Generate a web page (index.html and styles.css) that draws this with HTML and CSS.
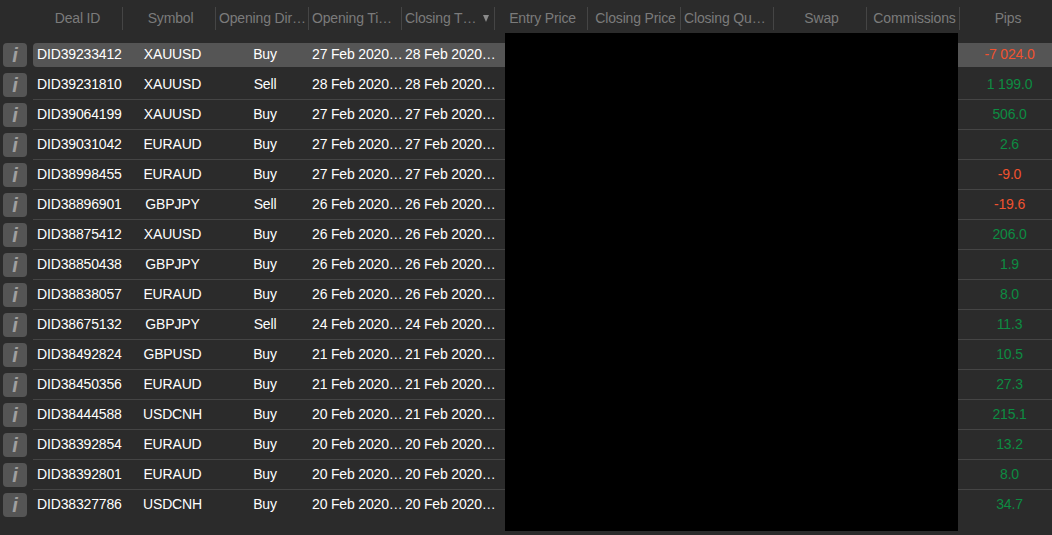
FILE: index.html
```html
<!DOCTYPE html>
<html lang="en">
<head>
<meta charset="utf-8">
<title>Deals</title>
<link rel="stylesheet" href="styles.css">
</head>
<body>
<div class="page">
  <div class="head">
    <div class="hc first">Deal ID</div>
    <div class="hc">Symbol</div>
    <div class="hc trunc">Opening Dir…</div>
    <div class="hc trunc">Opening Ti…</div>
    <div class="hc trunc">Closing T…<span class="arrow"></span></div>
    <div class="hc">Entry Price</div>
    <div class="hc">Closing Price</div>
    <div class="hc trunc">Closing Qu…</div>
    <div class="hc">Swap</div>
    <div class="hc">Commissions</div>
    <div class="hc last">Pips</div>
  </div>
  <div class="rows">
    <div class="row selected"><div class="info">i</div><div class="cells"><div class="inner"><span class="id">DID39233412</span><span class="sym">XAUUSD</span><span class="dir">Buy</span><span class="time">27 Feb 2020…</span><span class="time">28 Feb 2020…</span><span class="gap"></span><span class="pips neg">-7 024.0</span></div></div></div>
    <div class="row"><div class="info">i</div><div class="cells"><div class="inner"><span class="id">DID39231810</span><span class="sym">XAUUSD</span><span class="dir">Sell</span><span class="time">28 Feb 2020…</span><span class="time">28 Feb 2020…</span><span class="gap"></span><span class="pips pos">1 199.0</span></div></div></div>
    <div class="row"><div class="info">i</div><div class="cells"><div class="inner"><span class="id">DID39064199</span><span class="sym">XAUUSD</span><span class="dir">Buy</span><span class="time">27 Feb 2020…</span><span class="time">27 Feb 2020…</span><span class="gap"></span><span class="pips pos">506.0</span></div></div></div>
    <div class="row"><div class="info">i</div><div class="cells"><div class="inner"><span class="id">DID39031042</span><span class="sym">EURAUD</span><span class="dir">Buy</span><span class="time">27 Feb 2020…</span><span class="time">27 Feb 2020…</span><span class="gap"></span><span class="pips pos">2.6</span></div></div></div>
    <div class="row"><div class="info">i</div><div class="cells"><div class="inner"><span class="id">DID38998455</span><span class="sym">EURAUD</span><span class="dir">Buy</span><span class="time">27 Feb 2020…</span><span class="time">27 Feb 2020…</span><span class="gap"></span><span class="pips neg">-9.0</span></div></div></div>
    <div class="row"><div class="info">i</div><div class="cells"><div class="inner"><span class="id">DID38896901</span><span class="sym">GBPJPY</span><span class="dir">Sell</span><span class="time">26 Feb 2020…</span><span class="time">26 Feb 2020…</span><span class="gap"></span><span class="pips neg">-19.6</span></div></div></div>
    <div class="row"><div class="info">i</div><div class="cells"><div class="inner"><span class="id">DID38875412</span><span class="sym">XAUUSD</span><span class="dir">Buy</span><span class="time">26 Feb 2020…</span><span class="time">26 Feb 2020…</span><span class="gap"></span><span class="pips pos">206.0</span></div></div></div>
    <div class="row"><div class="info">i</div><div class="cells"><div class="inner"><span class="id">DID38850438</span><span class="sym">GBPJPY</span><span class="dir">Buy</span><span class="time">26 Feb 2020…</span><span class="time">26 Feb 2020…</span><span class="gap"></span><span class="pips pos">1.9</span></div></div></div>
    <div class="row"><div class="info">i</div><div class="cells"><div class="inner"><span class="id">DID38838057</span><span class="sym">EURAUD</span><span class="dir">Buy</span><span class="time">26 Feb 2020…</span><span class="time">26 Feb 2020…</span><span class="gap"></span><span class="pips pos">8.0</span></div></div></div>
    <div class="row"><div class="info">i</div><div class="cells"><div class="inner"><span class="id">DID38675132</span><span class="sym">GBPJPY</span><span class="dir">Sell</span><span class="time">24 Feb 2020…</span><span class="time">24 Feb 2020…</span><span class="gap"></span><span class="pips pos">11.3</span></div></div></div>
    <div class="row"><div class="info">i</div><div class="cells"><div class="inner"><span class="id">DID38492824</span><span class="sym">GBPUSD</span><span class="dir">Buy</span><span class="time">21 Feb 2020…</span><span class="time">21 Feb 2020…</span><span class="gap"></span><span class="pips pos">10.5</span></div></div></div>
    <div class="row"><div class="info">i</div><div class="cells"><div class="inner"><span class="id">DID38450356</span><span class="sym">EURAUD</span><span class="dir">Buy</span><span class="time">21 Feb 2020…</span><span class="time">21 Feb 2020…</span><span class="gap"></span><span class="pips pos">27.3</span></div></div></div>
    <div class="row"><div class="info">i</div><div class="cells"><div class="inner"><span class="id">DID38444588</span><span class="sym">USDCNH</span><span class="dir">Buy</span><span class="time">20 Feb 2020…</span><span class="time">21 Feb 2020…</span><span class="gap"></span><span class="pips pos">215.1</span></div></div></div>
    <div class="row"><div class="info">i</div><div class="cells"><div class="inner"><span class="id">DID38392854</span><span class="sym">EURAUD</span><span class="dir">Buy</span><span class="time">20 Feb 2020…</span><span class="time">20 Feb 2020…</span><span class="gap"></span><span class="pips pos">13.2</span></div></div></div>
    <div class="row"><div class="info">i</div><div class="cells"><div class="inner"><span class="id">DID38392801</span><span class="sym">EURAUD</span><span class="dir">Buy</span><span class="time">20 Feb 2020…</span><span class="time">20 Feb 2020…</span><span class="gap"></span><span class="pips pos">8.0</span></div></div></div>
    <div class="row last-row"><div class="info">i</div><div class="cells"><div class="inner"><span class="id">DID38327786</span><span class="sym">USDCNH</span><span class="dir">Buy</span><span class="time">20 Feb 2020…</span><span class="time">20 Feb 2020…</span><span class="gap"></span><span class="pips pos">34.7</span></div></div></div>
  </div>
  <div class="redaction"></div>
</div>
</body>
</html>
```
FILE: styles.css
```css
* { box-sizing: border-box; }
html, body { margin: 0; padding: 0; height: 100%; }
body {
  background: #2b2b2b;
  font-family: "Liberation Sans", Arial, sans-serif;
  font-size: 14px;
  letter-spacing: -0.16px;
  overflow: hidden;
}
.page {
  position: relative;
  width: 1052px;
  height: 535px;
  padding-top: 7px;
}
.head {
  display: grid;
  grid-template-columns: 93px repeat(9, 93px) 1fr;
  height: 23px;
  margin-left: 30px;
  margin-bottom: 10px;
  color: #7b7b7b;
}
.hc {
  display: flex;
  align-items: center;
  justify-content: center;
  padding-left: 3px;
  padding-bottom: 2px;
  border-right: 1px solid #454545;
  white-space: nowrap;
  overflow: hidden;
  position: relative;
}
.hc.last { border-right: 0; padding-left: 4px; }
.hc.trunc { justify-content: flex-start; }
.arrow {
  position: absolute;
  right: 5px;
  top: 8px;
  border-left: 3px solid transparent;
  border-right: 3px solid transparent;
  border-top: 7px solid #8a8a8a;
}
.row { display: flex; height: 30px; }
.info {
  flex: none;
  width: 24px;
  height: 24px;
  margin: 3px 6px 3px 3px;
  border-radius: 4px;
  background: #555;
  color: #a0a0a0;
  font: italic bold 20px/24px "Liberation Sans", sans-serif;
  letter-spacing: 0;
  text-align: center;
}
.cells {
  flex: 1;
  display: flex;
  align-items: center;
  padding-bottom: 1px;
  border-bottom: 1px solid #454545;
}
.row.selected .cells, .row.last-row .cells { border-bottom-color: transparent; }
.inner {
  flex: 1;
  height: 24px;
  margin-top: 1px;
  display: grid;
  grid-template-columns: 90px 93px 93px 93px 93px 1fr 94px;
  align-items: center;
  color: #fff;
  border-radius: 4px 0 0 4px;
}
.inner span { padding-bottom: 2px; }
.row.selected .inner { background: #555; }
.id { padding-left: 4px; }
.sym { text-align: center; padding-left: 6px; }
.dir { text-align: center; padding-left: 5px; }
.time { padding-left: 3px; white-space: nowrap; }
.pips { text-align: center; padding-left: 9px; }
.neg { color: #f0522f; }
.pos { color: #0d8c42; }
.redaction {
  position: absolute;
  left: 505px;
  top: 33px;
  width: 453px;
  height: 498px;
  background: #000;
}
```
